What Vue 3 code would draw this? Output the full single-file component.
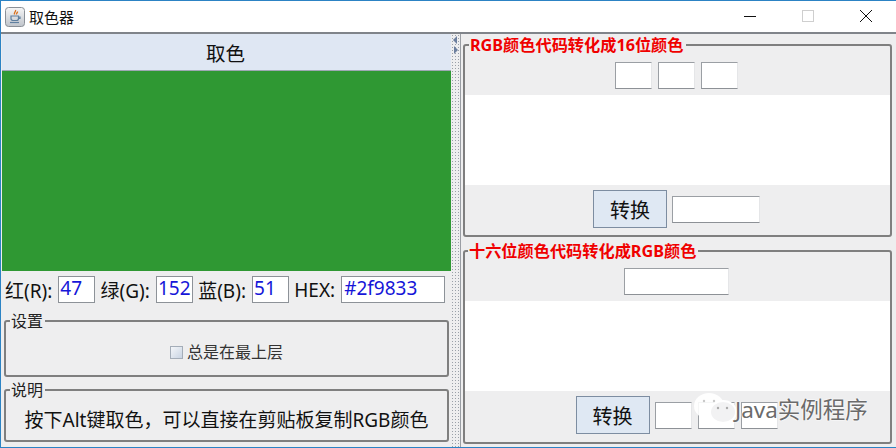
<script setup>
const fields = [
  { label: '红(R):', value: '47', cls: 'num' },
  { label: '绿(G):', value: '152', cls: 'num' },
  { label: '蓝(B):', value: '51', cls: 'num' },
  { label: 'HEX:', value: '#2f9833', cls: 'hex' }
]
</script>

<template>
  <div class="window">
    <header class="titlebar">
      <span class="appicon">
        <svg width="20" height="20" viewBox="0 0 20 20">
          <defs>
            <linearGradient id="ig" x1="0" y1="0" x2="0" y2="1">
              <stop offset="0" stop-color="#f6f6f6" />
              <stop offset="1" stop-color="#bfc4cb" />
            </linearGradient>
          </defs>
          <rect x="0.5" y="0.5" width="19" height="19" rx="3" fill="url(#ig)" stroke="#8b9097" />
          <path d="M10.5 3c1 1.5-2 2.500-1 4.500M12.500 4.500c.5 1-1.500 1.500-1 3" fill="none" stroke="#d9711f" stroke-width="1.300" />
          <path d="M6 9h7.500v2.500c0 1.500-1 2-2 2H8c-1 0-2-.5-2-2zM13.500 10h1.500v1.500h-1.500" fill="none" stroke="#5f7f9f" stroke-width="1.200" />
          <path d="M5 15.500h9" stroke="#5f7f9f" stroke-width="1.200" />
        </svg>
      </span>
      <span class="title">取色器</span>
      <div class="controls">
        <svg width="14" height="14" viewBox="0 0 14 14"><path d="M1 7.500h12" stroke="#111" stroke-width="1" /></svg>
        <svg width="14" height="14" viewBox="0 0 14 14"><rect x="1.500" y="1.500" width="11" height="11" fill="none" stroke="#cfcfcf" /></svg>
        <svg width="14" height="14" viewBox="0 0 14 14"><path d="M1 1l12 12M13 1L1 13" stroke="#111" stroke-width="1" /></svg>
      </div>
    </header>

    <main class="split">
      <section class="left">
        <button class="pick">取色</button>
        <div class="swatch"></div>
        <div class="values">
          <template v-for="f in fields" :key="f.label">
            <span class="vlabel">{{ f.label }}</span>
            <span class="vinput" :class="f.cls">{{ f.value }}</span>
          </template>
        </div>
        <fieldset class="group settings">
          <legend>设置</legend>
          <label class="check"><span class="box"></span>总是在最上层</label>
        </fieldset>
        <fieldset class="group note">
          <legend>说明</legend>
          <p>按下Alt键取色，可以直接在剪贴板复制RGB颜色</p>
        </fieldset>
      </section>

      <div class="divider">
        <span class="arrow al"></span>
        <span class="arrow ar"></span>
      </div>

      <section class="right">
        <fieldset class="group red first">
          <legend>RGB颜色代码转化成16位颜色</legend>
          <div class="inputs top">
            <span class="tinput s"></span><span class="tinput s"></span><span class="tinput s"></span>
          </div>
          <div class="result"></div>
          <div class="actions one">
            <button class="convert">转换</button>
            <span class="tinput m"></span>
          </div>
        </fieldset>
        <fieldset class="group red second">
          <legend>十六位颜色代码转化成RGB颜色</legend>
          <div class="inputs top">
            <span class="tinput l"></span>
          </div>
          <div class="result"></div>
          <div class="actions two">
            <button class="convert">转换</button>
            <span class="tinput s"></span><span class="tinput s"></span><span class="tinput s"></span>
          </div>
        </fieldset>
      </section>
    </main>

    <div class="watermark">
      <svg width="58" height="50" viewBox="0 0 58 50">
        <ellipse cx="17" cy="17" rx="15" ry="13" fill="#fff" opacity=".9" />
        <path d="M8 27l-1 8 8-5z" fill="#fff" opacity=".9" />
        <circle cx="12" cy="12" r="1.200" fill="#c8c8c8" />
        <circle cx="22" cy="12" r="1.200" fill="#c8c8c8" />
        <ellipse cx="31" cy="23" rx="13" ry="11" fill="#f2f2f3" stroke="#fff" stroke-width="2" />
        <path d="M36 33l6 6-1-8" fill="#fff" />
        <circle cx="26" cy="19" r="1.200" fill="#aaa" />
        <circle cx="35" cy="19" r="1.200" fill="#aaa" />
      </svg>
      <span>Java实例程序</span>
    </div>
  </div>
</template>

<style scoped>
.window {
  position: relative;
  width: 896px;
  height: 448px;
  box-sizing: border-box;
  overflow: hidden;
  border: 1px solid #2c83c4;
  border-right: 0;
  background: #eeeeef;
  display: flex;
  flex-direction: column;
  font-family: "Noto Sans", "Noto Sans CJK SC", sans-serif;
  color: #111;
}
.titlebar {
  height: 31px;
  flex: none;
  display: flex;
  align-items: center;
  padding-left: 4px;
  background: #fff;
  box-sizing: border-box;
}
.appicon { width: 20px; height: 20px; display: block; }
.appicon svg { display: block; }
.title { margin-left: 4px; font-size: 15px; line-height: 20px; }
.controls {
  margin-left: auto;
  display: flex;
  gap: 44px;
  padding: 0 23px 2px 0;
  align-items: center;
}
.controls svg { display: block; }
.split {
  flex: 1;
  min-height: 0;
  display: flex;
  border-top: 2px solid #80848a;
  padding-left: 1px;
}
.left {
  width: 449px;
  flex: none;
  display: flex;
  flex-direction: column;
}
.pick {
  height: 37px;
  flex: none;
  border: 0;
  border-bottom: 1px solid #9ea7b3;
  background: #dfe7f3;
  font: inherit;
  font-size: 19.500px;
  color: #111;
  padding: 0 2px 0 0;
}
.swatch { height: 200px; flex: none; background: #2f9833; }
.values {
  height: 27px;
  flex: none;
  margin-top: 5px;
  padding-left: 3px;
  display: flex;
  align-items: center;
  font-size: 19px;
}
.vlabel { white-space: nowrap; }
.vinput {
  box-sizing: border-box;
  height: 27px;
  background: #fff;
  border: 1px solid #8d9298;
  color: #1616d8;
  font-size: 19px;
  line-height: 23px;
  padding-left: 1px;
  overflow: hidden;
  margin: 0 5.500px 0 6px;
}
.num { width: 37px; }
.hex { width: 105px; padding-left: 2px; }
.group {
  margin: 0;
  padding: 0;
  min-width: 0;
  border: 2px solid #7f7f7f;
  border-radius: 3px;
  box-sizing: border-box;
}
.group legend {
  padding: 0 2px 0 1px;
  margin-left: 4px;
  font-size: 16px;
  line-height: 20px;
  color: #222;
}
.settings {
  width: 445px;
  height: 66px;
  margin: 8px 0 0 2px;
  display: flex;
  align-items: center;
  justify-content: center;
}
.check {
  display: flex;
  align-items: center;
  gap: 4px;
  font-size: 16px;
  line-height: 22px;
  color: #333;
  padding: 10px 0 0 0;
}
.box {
  width: 11px;
  height: 11px;
  background: linear-gradient(135deg, #f4f6f9, #c9d4e3);
  border: 1px solid #a4adb8;
}
.note {
  width: 445px;
  height: 62px;
  margin: 3px 0 0 2px;
}
.note p {
  margin: 7px 0 0;
  text-align: center;
  font-size: 19px;
  line-height: 26px;
  white-space: nowrap;
}
.divider {
  width: 10px;
  flex: none;
  position: relative;
  border-right: 1px solid #9a9ea4;
  box-sizing: border-box;
  background-image: radial-gradient(#9aa0a8 0.7px, transparent 0.8px);
  background-size: 3px 3px;
}
.arrow {
  position: absolute;
  left: 2px;
  width: 0;
  height: 0;
  border-top: 4px solid transparent;
  border-bottom: 4px solid transparent;
}
.al { top: 2px; border-right: 4px solid #6c7f9e; }
.ar { top: 12px; left: 3px; border-left: 4px solid #6c7f9e; }
.right {
  flex: 1;
  min-width: 0;
  padding: 1px 4px 0 2px;
  display: flex;
  flex-direction: column;
}
.red legend {
  color: #f00000;
  font-weight: 700;
  font-size: 16.200px;
  line-height: 20px;
  margin-left: 3px;
}
.first legend { margin-left: 4px; }
.first { height: 202px; }
.second { height: 203px; margin-top: 4px; }
.inputs {
  display: flex;
  justify-content: center;
  gap: 6px;
  padding-right: 2px;
}
.top { height: 27px; padding-top: 7px; margin-bottom: 6px; }
.tinput {
  display: block;
  box-sizing: border-box;
  height: 27px;
  background: #fff;
  border: 1px solid #d8dadd;
  border-color: #9b9fa4 #e5e6e8 #8d9196 #9b9fa4;
}
.s { width: 37px; }
.m { width: 88px; }
.l { width: 105px; }
.result { height: 90px; background: #fff; }
.actions {
  display: flex;
  align-items: center;
  justify-content: center;
  padding-top: 5px;
}
.one { gap: 5px; padding-right: 2px; }
.two { gap: 5px; padding-right: 2px; }
.two .tinput + .tinput { margin-left: 1px; }
.convert {
  width: 74px;
  height: 38px;
  box-sizing: border-box;
  border: 1px solid #7d8da1;
  background: #dfe8f3;
  font: inherit;
  font-size: 20px;
  color: #111;
  padding: 0;
}
.watermark {
  position: absolute;
  left: 691px;
  top: 388px;
  display: flex;
  align-items: flex-start;
  color: #6b6b6b;
  font-size: 22.500px;
  line-height: 26px;
  text-shadow: 0 0 2px #fff, 0 0 2px #fff;
}
.watermark span { margin-left: -15px; margin-top: 8px; white-space: nowrap; }
</style>
